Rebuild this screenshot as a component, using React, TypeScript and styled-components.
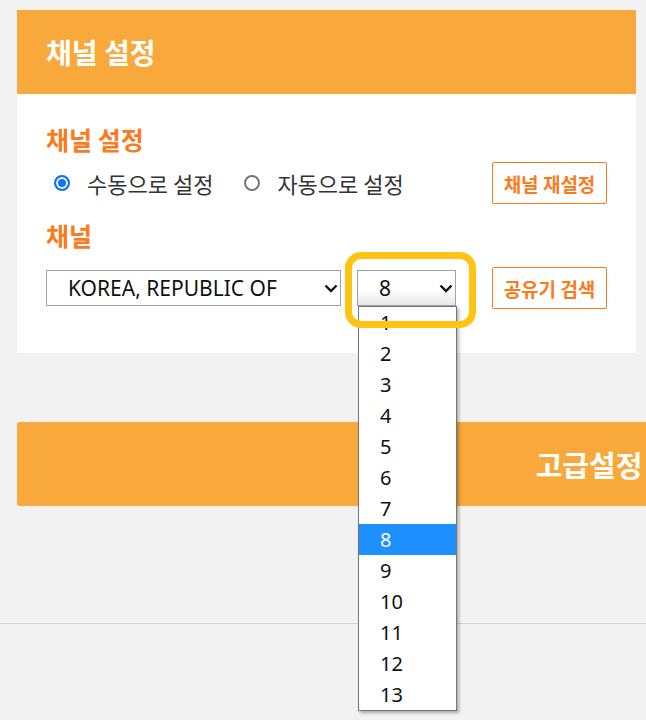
import styled, {createGlobalStyle} from "styled-components";

const ORANGE_BAR = "#f9a83b";
const ORANGE_TEXT = "#fb7a1c";

const GlobalStyle = createGlobalStyle`
    html, body {
        margin: 0;
        padding: 0;
        background: #f2f2f2;
        overflow: hidden;
    }
    body {
        font-family: "Noto Sans CJK KR", "Noto Sans", sans-serif;
        color: #333;
    }
`;

const Page = styled.div`
    box-sizing: border-box;
    width: 1161px;
    min-height: 720px;
    padding-top: 10px;
`;

const Card = styled.section`
    margin-left: 17px;
    width: 619px;
    background: #fff;
`;

const CardHeader = styled.h1`
    margin: 0;
    height: 84px;
    padding-left: 29px;
    display: flex;
    align-items: center;
    background: ${ORANGE_BAR};
    color: #fff;
    font-size: 28px;
    font-weight: 700;
`;

const CardBody = styled.div`
    padding: 30px 29px 44px 29px;
`;

const SectionTitle = styled.h2<{ $gap?: number }>`
    margin: ${(p) => p.$gap || 0}px 0 0 0;
    height: 30px;
    line-height: 30px;
    font-size: 25px;
    font-weight: 700;
    color: ${ORANGE_TEXT};
`;

const Row = styled.div<{ $gap: number }>`
    margin-top: ${(p) => p.$gap}px;
    display: flex;
    align-items: center;
    height: 42px;
`;

const RadioLabel = styled.label<{ $first?: boolean }>`
    display: flex;
    align-items: center;
    margin-left: ${(p) => (p.$first ? 8 : 31)}px;
    font-size: 22px;
    color: #333;
`;

const RadioMark = styled.span<{ $checked?: boolean }>`
    box-sizing: border-box;
    width: 16px;
    height: 16px;
    border-radius: 50%;
    margin-right: 17px;
    border: 2px solid ${(p) => (p.$checked ? "#1174f0" : "#777")};
    background: ${(p) => (p.$checked ? "#1174f0" : "#fff")};
    box-shadow: ${(p) => (p.$checked ? "inset 0 0 0 2px #fff" : "none")};
`;

const OutlineButton = styled.button`
    margin-left: auto;
    box-sizing: border-box;
    width: 115px;
    height: 42px;
    padding: 0;
    border: 1px solid ${ORANGE_TEXT};
    border-radius: 2px;
    background: #fff;
    color: ${ORANGE_TEXT};
    font-family: "Noto Sans CJK KR", sans-serif;
    font-size: 19px;
    font-weight: 700;
`;

const SelectBox = styled.div<{ $width: number; $open?: boolean }>`
    box-sizing: border-box;
    width: ${(p) => p.$width}px;
    height: 36px;
    padding: 0 0 0 21px;
    display: flex;
    align-items: center;
    justify-content: space-between;
    border: 1px solid #a2a2a2;
    background: ${(p) => (p.$open ? "linear-gradient(#fff 55%, #e6e6e6)" : "#fff")};
    font-family: "Noto Sans", "Noto Sans CJK KR", sans-serif;
    font-size: 21px;
    color: #111;
`;

const ChannelWrap = styled.div`
    position: relative;
    margin-left: 16px;
`;

const Highlight = styled.div`
    position: absolute;
    left: -12px;
    top: -18px;
    right: -20px;
    bottom: -22px;
    border: 7px solid #ffc313;
    border-radius: 16px;
    z-index: 3;
    pointer-events: none;
`;

const DropList = styled.ul`
    position: absolute;
    left: 1px;
    top: 36px;
    width: 97px;
    margin: 0;
    padding: 0;
    list-style: none;
    background: #fff;
    border: 1px solid #767676;
    box-shadow: 2px 2px 3px rgba(0, 0, 0, 0.3);
    z-index: 2;
`;

const DropItem = styled.li<{ $active?: boolean }>`
    height: 31px;
    line-height: 31px;
    padding-left: 21px;
    font-family: "Noto Sans", "Noto Sans CJK KR", sans-serif;
    font-size: 20px;
    color: ${(p) => (p.$active ? "#fff" : "#111")};
    background: ${(p) => (p.$active ? "#1e90ff" : "transparent")};
`;

const AdvancedBar = styled.div`
    margin: 69px 0 0 17px;
    width: 1144px;
    height: 84px;
    border-radius: 3px;
    background: ${ORANGE_BAR};
    display: flex;
    align-items: center;
    justify-content: center;
    color: #fff;
    font-size: 29px;
    font-weight: 700;
`;

const Divider = styled.hr`
    margin: 117px 0 0 0;
    border: 0;
    border-top: 1px solid #d2d2d2;
`;

const Chevron = () => (
    <svg width="14" height="9" viewBox="0 0 14 9" style={{marginRight: 2}}>
        <polyline points="1.5,1.5 7,7 12.5,1.5" fill="none" stroke="#111" strokeWidth="2.4"/>
    </svg>
);

const channels = Array.from({length: 13}, (_, i) => i + 1);

const App = () => {
    const current = 8;
    return (
        <>
            <GlobalStyle/>
            <Page>
                <Card>
                    <CardHeader>채널 설정</CardHeader>
                    <CardBody>
                        <SectionTitle>채널 설정</SectionTitle>
                        <Row $gap={8}>
                            <RadioLabel $first>
                                <RadioMark $checked/>
                                수동으로 설정
                            </RadioLabel>
                            <RadioLabel>
                                <RadioMark/>
                                자동으로 설정
                            </RadioLabel>
                            <OutlineButton>채널 재설정</OutlineButton>
                        </Row>
                        <SectionTitle $gap={16}>채널</SectionTitle>
                        <Row $gap={17}>
                            <SelectBox $width={295}>
                                KOREA, REPUBLIC OF
                                <Chevron/>
                            </SelectBox>
                            <ChannelWrap>
                                <SelectBox $width={99} $open>
                                    {current}
                                    <Chevron/>
                                </SelectBox>
                                <DropList>
                                    {channels.map((ch) => (
                                        <DropItem key={ch} $active={ch === current}>{ch}</DropItem>
                                    ))}
                                </DropList>
                                <Highlight/>
                            </ChannelWrap>
                            <OutlineButton>공유기 검색</OutlineButton>
                        </Row>
                    </CardBody>
                </Card>
                <AdvancedBar>고급설정</AdvancedBar>
                <Divider/>
            </Page>
        </>
    );
}

export default App;
